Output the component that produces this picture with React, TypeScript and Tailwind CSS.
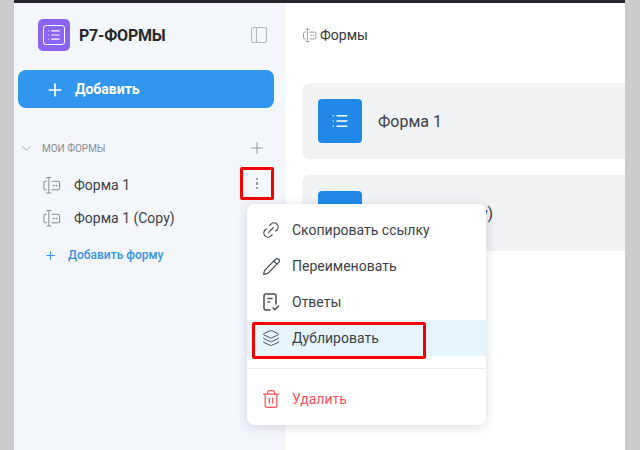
import React from 'react';
import { Plus, ChevronDown, PanelLeft, List, Link2, Pencil, Layers, Trash2 } from 'lucide-react';

const FormGlyph = ({ className }: { className?: string }) => (
  <svg viewBox="0 0 20 20" fill="none" stroke="currentColor" strokeWidth="1.1" strokeLinecap="round" strokeLinejoin="round" className={className}>
    <path d="M4.5 5.5H3.5a1.5 1.5 0 0 0-1.5 1.5v6a1.5 1.5 0 0 0 1.5 1.5h1" />
    <path d="M10.5 5.5h6.5a1.5 1.5 0 0 1 1.5 1.5v6a1.5 1.5 0 0 1-1.5 1.5h-6.5" />
    <path d="M5 1.5h4.5M5 18h4.5M7.2 1.5V18" />
    <path d="M12.2 10h.6M15 10h.6" strokeWidth="1.5" />
  </svg>
);

const AnswersGlyph = ({ className }: { className?: string }) => (
  <svg viewBox="0 0 20 20" fill="none" stroke="currentColor" strokeWidth="1.5" strokeLinecap="round" strokeLinejoin="round" className={className}>
    <path d="M9 18H5a2 2 0 0 1-2-2V4a2 2 0 0 1 2-2h8a2 2 0 0 1 2 2v8" />
    <path d="M7 6.5h4M7 10h1.5" />
    <path d="M12 16l1.8 1.8L17.5 14" />
  </svg>
);

const menuItems = [
  { label: 'Скопировать ссылку', icon: <Link2 size={20} strokeWidth={1.5} className="-rotate-45" /> },
  { label: 'Переименовать', icon: <Pencil size={19} strokeWidth={1.5} /> },
  { label: 'Ответы', icon: <AnswersGlyph className="w-5 h-5" /> },
  { label: 'Дублировать', icon: <Layers size={18} strokeWidth={1.3} />, active: true },
];

const SidebarForm = ({ name }: { name: string }) => (
  <div className="flex items-center h-[33px] pl-[28px] text-[14px] text-[#3d4249]">
    <FormGlyph className="w-[19px] h-[19px] text-[#8b8f96]" />
    <span className="ml-[13px]">{name}</span>
  </div>
);

export default function App() {
  return (
    <div className="relative w-[640px] h-[450px] overflow-hidden bg-[#cccccc] pl-[14px] pr-[15px] font-['Roboto',sans-serif]">
      <div className="h-[3px] bg-[#26262e]" />
      <div className="flex h-[447px] bg-white">
        {/* Sidebar */}
        <aside className="w-[272px] shrink-0 bg-[#f3f6fb] pt-[16px]">
          <div className="flex items-center pl-[24px] pr-[17px]">
            <div className="w-[32px] h-[32px] rounded-[5px] bg-[#8b63f6] flex items-center justify-center">
              <div className="w-[22px] h-[20px] border-[1.5px] border-white rounded-[3px] flex items-center justify-center text-white">
                <List size={14} strokeWidth={2} />
              </div>
            </div>
            <span className="ml-[9px] mt-[1px] text-[16px] font-bold text-[#26282c] tracking-[-0.2px]">Р7-ФОРМЫ</span>
            <PanelLeft size={20} strokeWidth={1.3} className="ml-auto text-[#b3b7bd]" />
          </div>
          <button className="mt-[19px] ml-[4px] w-[256px] h-[38px] pt-[1px] rounded-[8px] bg-[#3096ee] flex items-center pl-[27px] text-white text-[14px] font-bold">
            <Plus size={20} strokeWidth={2} />
            <span className="ml-[10px]">Добавить</span>
          </button>
          <div className="mt-[30px] flex items-center h-[20px] pl-[5px] pr-[20px] text-[10px] text-[#8b8f96]">
            <ChevronDown size={15} strokeWidth={1.3} className="text-[#9a9ea5]" />
            <span className="ml-[8px]">МОИ ФОРМЫ</span>
            <Plus size={18} strokeWidth={1.2} className="ml-auto text-[#8b8f96]" />
          </div>
          <div className="mt-[11px]">
            <SidebarForm name="Форма 1" />
            <SidebarForm name="Форма 1 (Copy)" />
          </div>
          <div className="mt-[11px] flex items-center pl-[30px] text-[12px] font-medium text-[#3a93e6]">
            <Plus size={13} strokeWidth={2} />
            <span className="ml-[11px]">Добавить форму</span>
          </div>
        </aside>

        {/* Main */}
        <main className="flex-1 pl-[16px] overflow-hidden">
          <div className="mt-[22px] flex items-center h-[20px] text-[14px] text-[#33373d]">
            <FormGlyph className="w-[15px] h-[15px] text-[#8b8f96]" />
            <span className="ml-[3px]">Формы</span>
          </div>
          <div className="mt-[38px] flex flex-col gap-[16px]">
            {['Форма 1', 'Форма 1 (Copy)'].map((name) => (
              <div key={name} className="h-[76px] rounded-l-[8px] bg-[#f1f2f4] flex items-center pl-[16px]">
                <div className="w-[44px] h-[44px] rounded-[4px] bg-[#2089e8] flex items-center justify-center text-white">
                  <List size={18} strokeWidth={2} />
                </div>
                <span className="ml-[16px] mt-[1px] text-[16px] text-[#3d4249]">{name}</span>
              </div>
            ))}
          </div>
        </main>
      </div>

      {/* Dots button highlight */}
      <div className="absolute left-[240px] top-[167px] w-[34px] h-[33px] border-[3px] border-[#f40000] rounded-[2px] flex flex-col items-center justify-center gap-[2px]">
        <i className="w-[2.5px] h-[2.5px] rounded-full bg-[#85898f]" />
        <i className="w-[2.5px] h-[2.5px] rounded-full bg-[#85898f]" />
        <i className="w-[2.5px] h-[2.5px] rounded-full bg-[#85898f]" />
      </div>

      {/* Context menu */}
      <div className="absolute left-[247px] top-[204px] w-[239px] h-[221px] bg-white rounded-[8px] shadow-[0_2px_12px_rgba(30,40,60,0.16)] pt-[8px] text-[14px] text-[#3d4249]">
        {menuItems.map((item) => (
          <div key={item.label} className={`flex items-center h-[36px] pl-[14px] ${item.active ? 'bg-[#e6f4fd]' : ''}`}>
            <span className="w-[20px] h-[20px] flex items-center justify-center text-[#4a4f56]">{item.icon}</span>
            <span className="ml-[11px]">{item.label}</span>
          </div>
        ))}
        <div className="mt-[12px] border-t border-[#e9ebf0]" />
        <div className="mt-[12px] flex items-center h-[36px] pl-[14px] text-[#f9545b]">
          <span className="w-[20px] h-[20px] flex items-center justify-center">
            <Trash2 size={20} strokeWidth={1.5} />
          </span>
          <span className="ml-[11px]">Удалить</span>
        </div>
      </div>

      {/* Highlight around the duplicate item */}
      <div className="absolute left-[252px] top-[322px] w-[174px] h-[37px] border-[3px] border-[#f40000] rounded-[2px]" />
    </div>
  );
}
